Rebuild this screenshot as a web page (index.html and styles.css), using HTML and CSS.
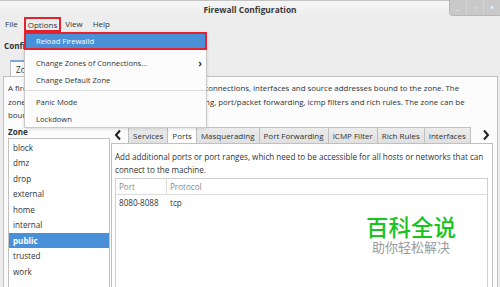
FILE: index.html
```html
<!DOCTYPE html>
<html>

<head>
    <title>Firewall Configuration</title>
    <link rel="stylesheet" href="styles.css">
</head>

<body>
    <div class="window">
        <!-- Title bar -->
        <header class="titlebar">
            <span class="title">Firewall Configuration</span>
            <div class="wm-buttons">
                <span class="wm-btn">_</span>
                <span class="wm-btn">&#9643;</span>
                <span class="wm-btn">&times;</span>
            </div>
        </header>

        <!-- Menu bar -->
        <nav class="menubar">
            <span class="menu-item">File</span>
            <span class="menu-item open">Options</span>
            <span class="menu-item">View</span>
            <span class="menu-item">Help</span>
        </nav>

        <div class="content">
            <div class="config-row"><b>Configuration:</b> Runtime</div>

            <div class="main-tabs">
                <span class="main-tab active">Zones</span>
                <span class="main-tab">Services</span>
            </div>

            <div class="main-panel">
                <p class="desc">
                    A firewalld zone defines the level of trust for network connections, interfaces and source addresses bound to the zone. The<br>
                    zone combines services, ports, protocols, masquerading, port/packet forwarding, icmp filters and rich rules. The zone can be<br>
                    bound to interfaces and source addresses.
                </p>

                <div class="split">
                    <div class="zones">
                        <div class="zone-label">Zone</div>
                        <ul class="zone-list">
                            <li>block</li>
                            <li>dmz</li>
                            <li>drop</li>
                            <li>external</li>
                            <li>home</li>
                            <li>internal</li>
                            <li class="selected">public</li>
                            <li>trusted</li>
                            <li>work</li>
                        </ul>
                    </div>

                    <div class="detail">
                        <div class="sub-tabs">
                            <svg class="arrow" width="8" height="12" viewBox="0 0 8 12">
                                <path d="M6 1.5 L2 6 L6 10.5" fill="none" stroke="#1f1f1f" stroke-width="2"/>
                            </svg>
                            <span class="sub-tab">Services</span>
                            <span class="sub-tab active">Ports</span>
                            <span class="sub-tab">Masquerading</span>
                            <span class="sub-tab">Port Forwarding</span>
                            <span class="sub-tab">ICMP Filter</span>
                            <span class="sub-tab">Rich Rules</span>
                            <span class="sub-tab">Interfaces</span>
                            <svg class="arrow right" width="8" height="12" viewBox="0 0 8 12">
                                <path d="M2 1.5 L6 6 L2 10.5" fill="none" stroke="#1f1f1f" stroke-width="2"/>
                            </svg>
                        </div>

                        <div class="sub-panel">
                            <p class="hint">
                                Add additional ports or port ranges, which need to be accessible for all hosts or networks that can<br>
                                connect to the machine.
                            </p>
                            <div class="table">
                                <div class="table-head">
                                    <span class="col-port">Port</span>
                                    <span class="col-proto">Protocol</span>
                                </div>
                                <div class="table-row">
                                    <span class="col-port">8080-8088</span>
                                    <span class="col-proto">tcp</span>
                                </div>
                            </div>
                        </div>
                    </div>
                </div>
            </div>
        </div>

        <!-- Options dropdown -->
        <div class="dropdown">
            <div class="drop-item active">Reload Firewalld</div>
            <div class="drop-item spaced">Change Zones of Connections... <span class="sub-arrow">&#8250;</span></div>
            <div class="drop-item">Change Default Zone</div>
            <div class="drop-sep"></div>
            <div class="drop-item">Panic Mode</div>
            <div class="drop-item">Lockdown</div>
        </div>

        <!-- Watermark -->
        <div class="watermark">
            <div class="wm-big">百科全说</div>
            <div class="wm-small">助你轻松解决</div>
        </div>
    </div>
</body>

</html>
```

FILE: styles.css
```css
* {
    margin: 0;
    padding: 0;
    box-sizing: border-box;
}

body {
    font-family: 'Open Sans', 'Noto Sans', sans-serif;
    font-size: 8.1px;
    color: #2e3436;
    background: #ededed;
    width: 500px;
    height: 287px;
    overflow: hidden;
}

.window {
    position: relative;
    width: 500px;
    height: 287px;
    overflow: hidden;
    background: #ededed;
}

/* Title bar */
.titlebar {
    height: 17px;
    display: flex;
    align-items: center;
    justify-content: center;
    background: linear-gradient(#f6f6f6, #ececec);
    border-top: 1px solid #c4c4c4;
}

.title {
    font-weight: 700;
    font-size: 8.4px;
    color: #3a3a3a;
}

.wm-buttons {
    position: absolute;
    top: 0;
    right: 0;
    width: 51px;
    height: 16px;
    display: flex;
    background: #c9c9c9;
    border-radius: 0 0 0 4px;
    border-left: 1px solid #b8b8b8;
    border-bottom: 1px solid #b8b8b8;
}

.wm-btn {
    flex: 1;
    display: flex;
    align-items: center;
    justify-content: center;
    color: #f4f4f4;
    font-size: 7px;
    font-weight: 700;
    border-right: 1px solid #d4d4d4;
}

.wm-btn:last-child {
    border-right: none;
}

/* Menu bar */
.menubar {
    height: 15px;
    display: flex;
    align-items: center;
    padding-left: 1px;
    font-size: 8px;
}

.menu-item {
    padding: 0 4px;
    margin-right: 2px;
    height: 15px;
    line-height: 14px;
}

.menu-item.open {
    border: 2px solid #e3232d;
    padding: 0 2px;
    margin-right: 0;
    line-height: 11px;
}

/* Dropdown */
.dropdown {
    position: absolute;
    left: 24px;
    top: 32px;
    width: 183px;
    height: 96px;
    background: #fcfcfc;
    border: 1px solid #c8c8c8;
    box-shadow: 0 1px 3px rgba(0, 0, 0, 0.15);
    font-size: 7.6px;
}

.drop-item {
    height: 16.5px;
    line-height: 16.5px;
    padding-left: 11px;
    position: relative;
}

.drop-item.active {
    height: 18px;
    line-height: 14px;
    background: #4a90d9;
    color: #ffffff;
    border: 2px solid #e3232d;
    margin: -1px -1px 0;
    padding-left: 10px;
}

.drop-item.spaced {
    margin-top: 5px;
}

.sub-arrow {
    position: absolute;
    right: 4px;
    font-size: 10px;
    font-weight: 700;
}

.drop-sep {
    height: 1px;
    background: #dcdcdc;
    margin: 2px 0 3px;
}

/* Main content */
.config-row {
    height: 28px;
    line-height: 28px;
    padding-left: 4px;
}

.main-tabs {
    display: flex;
    padding-left: 10px;
    height: 16px;
}

.main-tab {
    padding: 0 5px;
    line-height: 15px;
    border: 1px solid #c0c0c0;
    border-bottom: none;
    background: #e4e4e4;
}

.main-tab.active {
    background: #fcfcfc;
    border-top: 2px solid #7fa6d8;
}

.main-panel {
    margin: 0 2px 0 3px;
    height: 220px;
    background: #fcfcfc;
    border: 1px solid #c0c0c0;
    border-bottom: none;
}

.desc {
    padding: 5px 4px 0;
    line-height: 13.5px;
    white-space: nowrap;
    height: 46px;
    font-size: 7.9px;
}

.split {
    display: flex;
}

.zones {
    width: 106px;
    flex-shrink: 0;
    padding: 3px 0 0 4px;
}

.zone-label {
    font-weight: 700;
    line-height: 12px;
}

.zone-list {
    list-style: none;
    width: 102px;
    height: 160px;
    background: #ffffff;
    border: 1px solid #c0c0c0;
    padding-top: 0.5px;
}

.zone-list li {
    height: 15.5px;
    line-height: 15.5px;
    padding-left: 4px;
}

.zone-list li.selected {
    background: #4a90d9;
    color: #ffffff;
    font-weight: 700;
}

.detail {
    flex: 1;
    min-width: 0;
    padding: 4px 4px 0 1px;
}

.sub-tabs {
    display: flex;
    align-items: flex-end;
    height: 16px;
    font-size: 8px;
}

.arrow {
    flex-shrink: 0;
    align-self: center;
    margin: 0 6px 0 3px;
}

.arrow.right {
    margin: 0 0 0 11px;
}

.sub-tab {
    flex-shrink: 0;
    white-space: nowrap;
    height: 16px;
    line-height: 15px;
    padding: 0 4px;
    border: 1px solid #c0c0c0;
    border-bottom: none;
    border-left: none;
    background: linear-gradient(#ececec, #e0e0e0);
}

.sub-tab:first-of-type {
    border-left: 1px solid #c0c0c0;
}

.sub-tab.active {
    background: #ffffff;
    border-top: 1px solid #7fa6d8;
}

.sub-panel {
    height: 160px;
    background: #ffffff;
    border: 1px solid #c0c0c0;
    padding: 6px 4px 0 3px;
}

.hint {
    line-height: 13px;
    white-space: nowrap;
}

.table {
    margin-top: 2px;
    height: 120px;
    border: 1px solid #d0d0d0;
}

.table-head {
    display: flex;
    height: 16px;
    line-height: 15px;
    border-bottom: 1px solid #dcdcdc;
    color: #8a8a8a;
}

.table-row {
    display: flex;
    height: 16px;
    line-height: 16px;
}

.col-port {
    width: 51px;
    padding-left: 3px;
}

.table-head .col-port {
    border-right: 1px solid #dcdcdc;
}

.col-proto {
    padding-left: 3px;
}

/* Watermark */
.watermark {
    position: absolute;
    left: 366px;
    top: 212px;
    text-align: center;
    font-family: 'Noto Sans CJK SC', sans-serif;
}

.wm-big {
    font-size: 22.5px;
    line-height: 28px;
    color: #18c41e;
    font-weight: 500;
}

.wm-small {
    font-size: 13px;
    line-height: 14px;
    color: #9a9a9a;
}
```
